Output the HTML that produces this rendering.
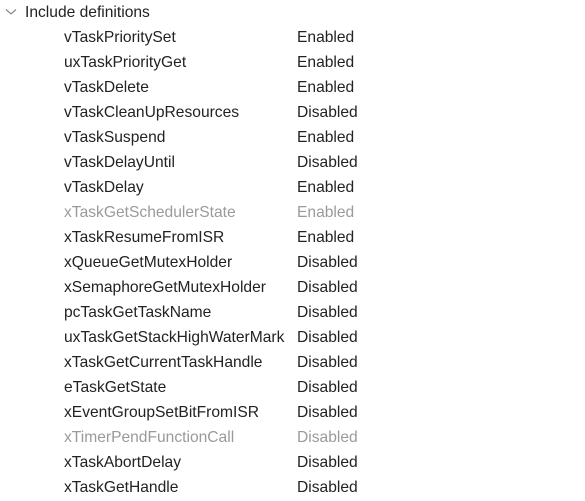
<!DOCTYPE html>
<html><head><style>
body{margin:0;width:585px;height:501px;background:#fff;font-family:"Liberation Sans",sans-serif;font-size:15.6px;color:#222;position:relative;overflow:hidden}
.r{position:absolute;height:25px;line-height:25px;white-space:nowrap}
.n{left:64px}.v{left:297px}
.g{color:#9a9a9a}
</style></head><body>
<svg style="position:absolute;left:5px;top:8px" width="12" height="8"><path d="M1 1.5 L6 6 L11 1.5" fill="none" stroke="#888" stroke-width="1.2"/></svg>
<div class="r" style="left:25px;top:0px">Include definitions</div>
<div class="r n" style="top:25px">vTaskPrioritySet</div><div class="r v" style="top:25px">Enabled</div>
<div class="r n" style="top:50px">uxTaskPriorityGet</div><div class="r v" style="top:50px">Enabled</div>
<div class="r n" style="top:75px">vTaskDelete</div><div class="r v" style="top:75px">Enabled</div>
<div class="r n" style="top:100px">vTaskCleanUpResources</div><div class="r v" style="top:100px">Disabled</div>
<div class="r n" style="top:125px">vTaskSuspend</div><div class="r v" style="top:125px">Enabled</div>
<div class="r n" style="top:150px">vTaskDelayUntil</div><div class="r v" style="top:150px">Disabled</div>
<div class="r n" style="top:175px">vTaskDelay</div><div class="r v" style="top:175px">Enabled</div>
<div class="r n g" style="top:200px">xTaskGetSchedulerState</div><div class="r v g" style="top:200px">Enabled</div>
<div class="r n" style="top:225px">xTaskResumeFromISR</div><div class="r v" style="top:225px">Enabled</div>
<div class="r n" style="top:250px">xQueueGetMutexHolder</div><div class="r v" style="top:250px">Disabled</div>
<div class="r n" style="top:275px">xSemaphoreGetMutexHolder</div><div class="r v" style="top:275px">Disabled</div>
<div class="r n" style="top:300px">pcTaskGetTaskName</div><div class="r v" style="top:300px">Disabled</div>
<div class="r n" style="top:325px">uxTaskGetStackHighWaterMark</div><div class="r v" style="top:325px">Disabled</div>
<div class="r n" style="top:350px">xTaskGetCurrentTaskHandle</div><div class="r v" style="top:350px">Disabled</div>
<div class="r n" style="top:375px">eTaskGetState</div><div class="r v" style="top:375px">Disabled</div>
<div class="r n" style="top:400px">xEventGroupSetBitFromISR</div><div class="r v" style="top:400px">Disabled</div>
<div class="r n g" style="top:425px">xTimerPendFunctionCall</div><div class="r v g" style="top:425px">Disabled</div>
<div class="r n" style="top:450px">xTaskAbortDelay</div><div class="r v" style="top:450px">Disabled</div>
<div class="r n" style="top:475px">xTaskGetHandle</div><div class="r v" style="top:475px">Disabled</div>
</body></html>
